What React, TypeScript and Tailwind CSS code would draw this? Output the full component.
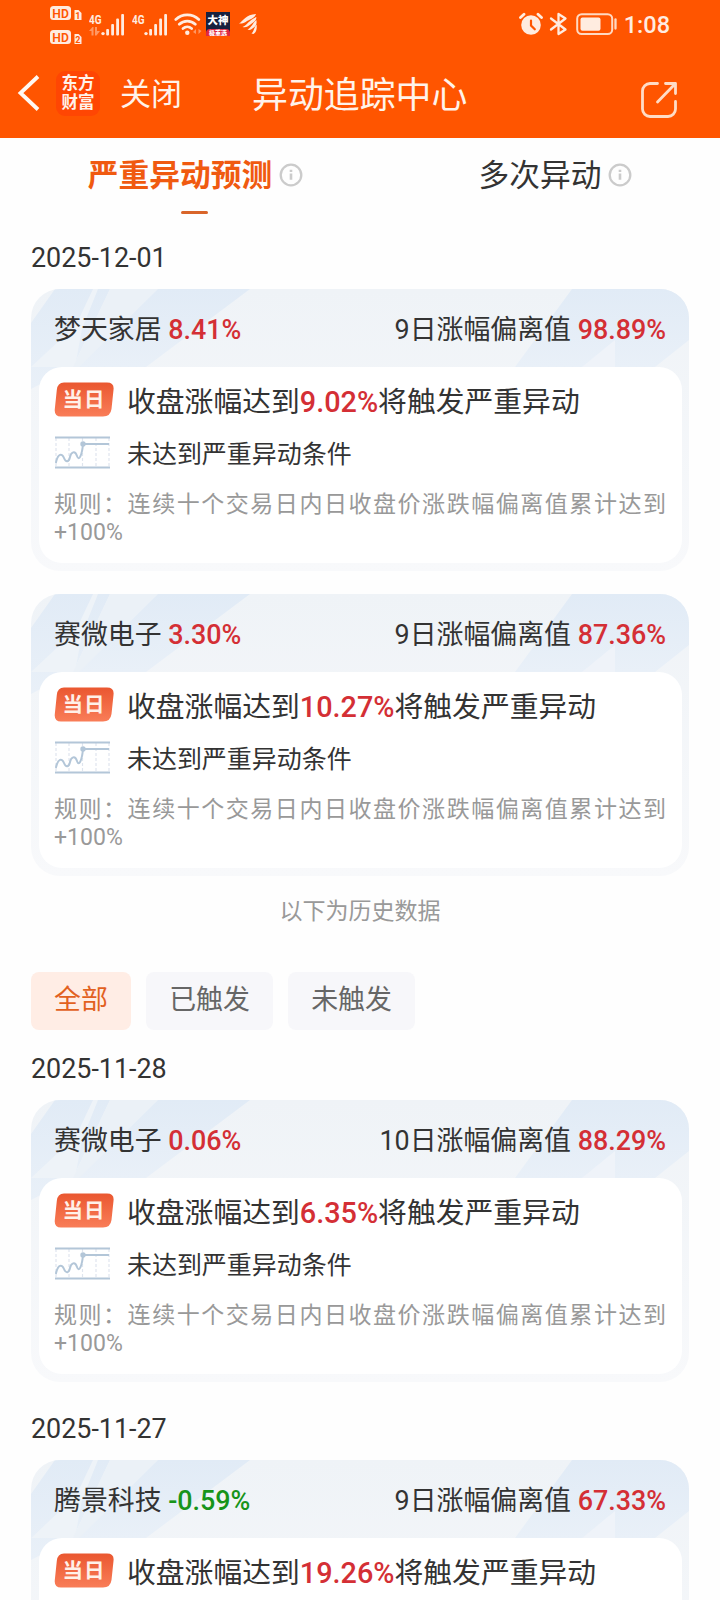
type Stock = {
  name: string;
  change: string;
  days: number;
  deviation: string;
  trigger: string;
};

const today: Stock[] = [
  { name: "梦天家居", change: "8.41%", days: 9, deviation: "98.89%", trigger: "9.02%" },
  { name: "赛微电子", change: "3.30%", days: 9, deviation: "87.36%", trigger: "10.27%" },
];

const history: { date: string; stock: Stock }[] = [
  {
    date: "2025-11-28",
    stock: { name: "赛微电子", change: "0.06%", days: 10, deviation: "88.29%", trigger: "6.35%" },
  },
  {
    date: "2025-11-27",
    stock: { name: "腾景科技", change: "-0.59%", days: 9, deviation: "67.33%", trigger: "19.26%" },
  },
];

function Signal() {
  return (
    <svg width="36" height="24" viewBox="0 0 36 24" fill="#ffece0">
      <text x="0" y="10.5" fontSize="12.5" fontWeight="700" textLength="12.5" lengthAdjust="spacingAndGlyphs">
        4G
      </text>
      <circle cx="14" cy="20.6" r="1.7" />
      <rect x="17.2" y="16" width="2.8" height="6.4" rx="1" />
      <rect x="22.2" y="11" width="2.8" height="11.4" rx="1" />
      <rect x="27.2" y="5.5" width="2.8" height="17" rx="1" />
      <rect x="32.2" y="1" width="2.8" height="21.5" rx="1" />
    </svg>
  );
}

function HdBadge({ n }: { n: number }) {
  return (
    <svg width="32" height="14" viewBox="0 0 32 14">
      <rect x="0" y="0" width="21" height="14" rx="3.5" fill="#ffece0" />
      <text x="2.3" y="11.5" fontSize="12.5" fontWeight="600" fill="#ff5500" textLength="16.5" lengthAdjust="spacingAndGlyphs">
        HD
      </text>
      <path d="M24.5 4h4l3 3v7h-7z" fill="#ffece0" />
      <text x="25.3" y="13" fontSize="9" fontWeight="700" fill="#ff5500">
        {n}
      </text>
    </svg>
  );
}

function StatusBar() {
  return (
    <div className="flex h-[48px] items-start pt-[6px] pr-[50px] pl-[50px] text-[#ffece0]">
      <div className="flex flex-col gap-[10px]">
        <HdBadge n={1} />
        <HdBadge n={2} />
      </div>
      <div className="relative mt-[6.5px] ml-[7px] flex gap-[7px]">
        <Signal />
        <Signal />
        <svg className="absolute top-[14px] left-0" width="11" height="9" viewBox="0 0 11 9" fill="#ff9763">
          <path d="M0 4l3.500-4h1v8.500h-2V4zM6 0h2v4h3L7.500 8.500H6z" />
        </svg>
      </div>
      <svg className="mt-[6px] ml-[6px]" width="28" height="24" viewBox="0 0 28 24" fill="none" stroke="#ffece0" strokeWidth="2.7" strokeLinecap="round">
        <path d="M1.800 7.500a16.500 16.500 0 0 1 23 0M5.300 12.300a11.500 11.500 0 0 1 16 0M9 16.500a6.500 6.500 0 0 1 8.600 0" />
        <circle cx="13.3" cy="20.8" r="2.2" fill="#ffece0" stroke="none" />
        <path d="M19 20l3-3v5zM24.500 17v5l3-3z" fill="#ff9763" stroke="none" />
      </svg>
      <div className="mt-[6px] ml-[4px] flex h-[24px] w-[24px] flex-col overflow-hidden bg-[#17213f] text-center font-black text-white">
        <span className="h-[17px] text-[10.5px] leading-[17px]">大神</span>
        <span className="h-[7px] rounded-t-[4px] bg-[#e02840] text-[6px] leading-[7px]">极重选</span>
      </div>
      <svg className="mt-[7px] ml-[9px]" width="20" height="22" viewBox="0 0 20 22" fill="#ffece0">
        <path d="M0 10.500C4 8 7 1.500 17 1c-1 3-3 4-6 5.500C7 8.300 5 11 0 10.500z" />
        <path d="M3.500 14C8 12 10 7 17.300 4c.3 4-3 5.500-5.800 7.500C9 13.300 7 15 3.500 14z" />
        <path d="M8.500 16.500c4-2 5-6 8.800-9.500 1 4-.5 6-2.800 7.800-2 1.600-3.500 2.700-6 1.700z" />
        <path d="M12.500 20.500c2.500-2 2-5 5-9 .8 4-.3 8-3 9.500z" />
      </svg>
      <div className="mt-[6px] ml-auto flex h-[24px] items-center">
        <svg width="24" height="24" viewBox="0 0 24 24" fill="none">
          <circle cx="12" cy="13" r="9.8" fill="#ffece0" />
          <path d="M1.500 5.500L5 2.200M19 2.200l3.500 3.300" stroke="#ffece0" strokeWidth="2.8" strokeLinecap="round" />
          <path d="M12 8.500v5l3.800 3.800" stroke="#ff5500" strokeWidth="2.2" strokeLinecap="round" />
        </svg>
        <svg className="ml-[6px]" width="20" height="24" viewBox="0 0 20 24" fill="none" stroke="#ffece0" strokeWidth="2.3" strokeLinejoin="round" strokeLinecap="round">
          <path d="M2 6.500l14.500 11L9.500 22V2l7 4.500L2 17.500" />
        </svg>
        <svg className="ml-[7px]" width="42" height="24" viewBox="0 0 42 24" fill="none">
          <rect x="1.2" y="2.2" width="35" height="19.8" rx="4.5" stroke="#ffd9c2" strokeWidth="2" />
          <rect x="4.5" y="5.5" width="20" height="13.2" rx="2" fill="#ffece0" />
          <path d="M39.500 7.500v9" stroke="#ffd9c2" strokeWidth="2.3" strokeLinecap="round" />
        </svg>
        <span className="mt-[3px] ml-[6px] text-[23.5px] leading-none font-medium">1:08</span>
      </div>
    </div>
  );
}

function TitleBar() {
  return (
    <div className="flex h-[90px] items-center text-[#fff3ea]">
      <svg className="ml-[17px]" width="24" height="38" viewBox="0 0 24 38" fill="none" stroke="#fff8f2" strokeWidth="3.8">
        <path d="M21 2.500L3.500 19 21 35.500" />
      </svg>
      <div className="ml-[15px] flex h-[45px] w-[44px] flex-col items-center justify-center rounded-[9px] bg-[#ff4603] text-[16.5px] leading-[19px] font-bold">
        <span>东方</span>
        <span>财富</span>
      </div>
      <span className="mt-[4px] ml-[20px] text-[31px] leading-[40px]">关闭</span>
      <h1 className="mt-[5px] ml-[70px] text-[35.9px] leading-[44px]">异动追踪中心</h1>
      <svg className="mt-[14px] ml-auto mr-[41px]" width="40" height="40" viewBox="0 0 40 40" fill="none" stroke="#ffdcc6" strokeWidth="2.8" strokeLinecap="round" strokeLinejoin="round">
        <path d="M18.500 3.500H11a7.500 7.500 0 0 0-7.500 7.500v18A7.500 7.500 0 0 0 11 36.500h18a7.500 7.500 0 0 0 7.500-7.500v-7.500M26.500 3.500h10v10M36 4L18.500 22" />
      </svg>
    </div>
  );
}

function InfoIcon() {
  return (
    <svg width="24" height="24" viewBox="0 0 24 24" fill="none" stroke="#cbcbcb">
      <circle cx="12" cy="12" r="10.3" strokeWidth="2.3" />
      <path d="M12 10.500v6.300M12 6.800v2.200" strokeWidth="2.6" />
    </svg>
  );
}

function CardPattern() {
  return (
    <svg className="absolute inset-0" width="658" height="110" viewBox="0 0 658 110">
      <defs>
        <linearGradient id="streak" x1="0" y1="0" x2="0" y2="1">
          <stop offset="0" stopColor="#e1ebf6" />
          <stop offset="1" stopColor="#e9f0f8" />
        </linearGradient>
      </defs>
      <path d="M24 0H79L42 78 0 100V34z" fill="url(#streak)" />
      <path d="M62 0H67L51 40 44 78H0L45 36z" fill="#eef3f8" />
      <path d="M79 0H127L55 78H42z" fill="#ebf1f7" />
      <path d="M127 0H219L115 78H48z" fill="url(#streak)" />
      <path d="M541 0H658V51L624 78H484z" fill="url(#streak)" />
      <path d="M551 78L584 51V78z" fill="#eff3f9" />
    </svg>
  );
}

function DayBadge() {
  return (
    <svg width="60" height="35" viewBox="0 0 60 35">
      <defs>
        <linearGradient id="day" x1="0" y1="0" x2="0" y2="1">
          <stop offset="0" stopColor="#ea5730" />
          <stop offset="1" stopColor="#f97d58" />
        </linearGradient>
      </defs>
      <path d="M10 .5H53Q60.500 .5 59.500 8L57.500 27Q56.500 34.500 49 34.500H7Q0 34.500 .8 27L2.800 8Q3.500 .5 10 .5z" fill="url(#day)" />
      <text x="8.5" y="25" fontSize="20.5" fontWeight="700" fill="#fff0e8" textLength="42">
        当日
      </text>
    </svg>
  );
}

function MiniChart() {
  return (
    <svg width="55" height="33" viewBox="0 0 55 33" fill="none" stroke="#b3c6d8" strokeWidth="2">
      <path d="M1 2v29M14 2v29M27.500 2v29M41 2v29M54 2v29" stroke="#dfe5ee" strokeWidth="1.2" strokeDasharray="3 2" />
      <path d="M0 1.500h55M0 31.500h55" />
      <path d="M.8 27C3 17 7 17 9 22s5 4 6-1 5-7 7-1 5-1 6-12H54" strokeLinejoin="round" />
      <circle cx="28" cy="8" r="2.7" fill="#b3c6d8" stroke="none" />
    </svg>
  );
}

function StockCard({ stock }: { stock: Stock }) {
  const down = stock.change.startsWith("-");
  return (
    <section className="relative h-[282px] w-[658px] shrink-0 overflow-hidden rounded-[29px] bg-linear-to-b from-[#eff3f7] to-[#f8f9fb]">
      <CardPattern />
      <div className="relative flex h-[78px] items-center justify-between px-[23px] pt-[5px] text-[26.88px]">
        <p>
          {stock.name} <b className={down ? "font-medium text-[#17941a]" : "font-medium text-[#d42f35]"}>{stock.change}</b>
        </p>
        <p>
          {stock.days}日涨幅偏离值 <b className="font-medium text-[#d42f35]">{stock.deviation}</b>
        </p>
      </div>
      <div className="relative mx-[7.5px] h-[196px] rounded-[23px] bg-white px-[15.5px] pt-[11px]">
        <div className="flex h-[46px] items-center">
          <div className="w-[73px] pb-[3px]">
            <DayBadge />
          </div>
          <p className="pt-[4px] text-[28.8px]">
            收盘涨幅达到<b className="font-medium text-[#d42f35]">{stock.trigger}</b>将触发严重异动
          </p>
        </div>
        <div className="mt-[7px] flex h-[42px] items-center">
          <div className="w-[73px] pl-px">
            <MiniChart />
          </div>
          <p className="pt-[5px] text-[24.96px]">未达到严重异动条件</p>
        </div>
        <p className="mt-[18px] text-justify text-[23.04px] leading-[28px] text-[#999999]">
          规则：连续十个交易日内日收盘价涨跌幅偏离值累计达到+100%
        </p>
      </div>
    </section>
  );
}

export default function App() {
  return (
    <div className="h-[1600px] w-[720px] overflow-hidden bg-[#fefefe] font-[Roboto,'Noto_Sans_CJK_SC',sans-serif] text-[#333333]">
      <header className="h-[138px] bg-[#ff5500]">
        <StatusBar />
        <TitleBar />
      </header>

      <nav className="flex h-[98px] text-[30.72px]">
        <div className="flex w-[392px] flex-col items-center">
          <div className="flex h-[73px] items-center gap-[7px] text-[#f05a10]">
            <b className="pt-[3px] font-bold">严重异动预测</b>
            <InfoIcon />
          </div>
          <i className="mr-px h-[3px] w-[27px] rounded-full bg-[#d9652a]" />
        </div>
        <div className="flex h-[73px] w-[330px] items-center justify-center gap-[7px]">
          <span className="pt-[3px]">多次异动</span>
          <InfoIcon />
        </div>
      </nav>

      <main className="px-[31px]">
        <h2 className="h-[53px] text-[26.88px] leading-[44px]">2025-12-01</h2>
        <div className="flex flex-col gap-[23px]">
          {today.map((s) => (
            <StockCard key={s.name} stock={s} />
          ))}
        </div>

        <p className="mt-[20px] h-[76px] text-center text-[23.04px] leading-[32px] text-[#999999]">以下为历史数据</p>

        <div className="flex gap-[15px] text-[26.88px] leading-[55px] text-[#666666]">
          <button className="h-[58px] w-[100px] rounded-[8px] bg-[#ffede5] pb-[2px] text-[#e2611f]">全部</button>
          <button className="h-[58px] w-[127px] rounded-[8px] bg-[#f7f7fa] pb-[2px]">已触发</button>
          <button className="h-[58px] w-[127px] rounded-[8px] bg-[#f7f7fa] pb-[2px]">未触发</button>
        </div>

        {history.map(({ date, stock }) => (
          <div key={date} className="pb-[8px]">
            <h2 className="mt-[17px] h-[53px] text-[26.88px] leading-[44px]">{date}</h2>
            <StockCard stock={stock} />
          </div>
        ))}
      </main>
    </div>
  );
}
